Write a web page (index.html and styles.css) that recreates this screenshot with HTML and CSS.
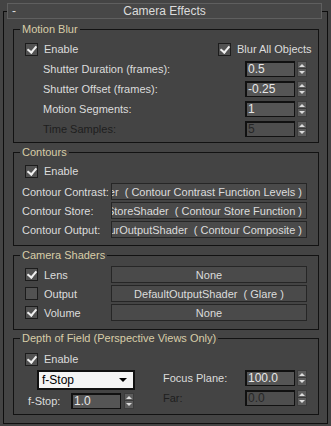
FILE: index.html
```html
<!DOCTYPE html>
<html lang="en">
<head>
  <meta charset="UTF-8">
  <title>Camera Effects</title>
  <link rel="stylesheet" href="styles.css">
</head>
<body>

  <div class="rollout">
    <div class="rollout-head">
      <span class="collapse">-</span>
      <span class="rollout-title">Camera Effects</span>
    </div>

    <fieldset class="group group-blur">
      <legend>Motion Blur</legend>
      <div class="row row-split">
        <label class="check"><span class="box on"></span>Enable</label>
        <label class="check"><span class="box on"></span>Blur All Objects</label>
      </div>
      <div class="row spin-row">
        <span class="lbl">Shutter Duration (frames):</span>
        <span class="field">0.5</span><span class="arrows"></span>
      </div>
      <div class="row spin-row">
        <span class="lbl">Shutter Offset (frames):</span>
        <span class="field">-0.25</span><span class="arrows"></span>
      </div>
      <div class="row spin-row">
        <span class="lbl">Motion Segments:</span>
        <span class="field">1</span><span class="arrows"></span>
      </div>
      <div class="row spin-row disabled">
        <span class="lbl">Time Samples:</span>
        <span class="field">5</span><span class="arrows"></span>
      </div>
    </fieldset>

    <fieldset class="group group-contours">
      <legend>Contours</legend>
      <div class="row row-check">
        <label class="check"><span class="box on"></span>Enable</label>
      </div>
      <div class="slot-row">
        <span class="slot-label">Contour Contrast:</span>
        <span class="slot slot-right"><span class="slot-text">DefaultContourContrastShader&nbsp; ( Contour Contrast Function Levels )</span></span>
      </div>
      <div class="slot-row">
        <span class="slot-label">Contour Store:</span>
        <span class="slot slot-right"><span class="slot-text">DefaultContourStoreShader&nbsp; ( Contour Store Function )</span></span>
      </div>
      <div class="slot-row">
        <span class="slot-label">Contour Output:</span>
        <span class="slot slot-right"><span class="slot-text">DefaultContourOutputShader&nbsp; ( Contour Composite )</span></span>
      </div>
    </fieldset>

    <fieldset class="group group-shaders">
      <legend>Camera Shaders</legend>
      <div class="slot-row">
        <label class="check slot-check"><span class="box on"></span>Lens</label>
        <span class="slot">None</span>
      </div>
      <div class="slot-row">
        <label class="check slot-check"><span class="box"></span>Output</label>
        <span class="slot">DefaultOutputShader&nbsp; ( Glare )</span>
      </div>
      <div class="slot-row">
        <label class="check slot-check"><span class="box on"></span>Volume</label>
        <span class="slot">None</span>
      </div>
    </fieldset>

    <fieldset class="group group-dof">
      <legend>Depth of Field (Perspective Views Only)</legend>
      <div class="row row-check">
        <label class="check"><span class="box on"></span>Enable</label>
      </div>
      <div class="dof-cols">
        <div class="dof-left">
          <div class="dropdown">f-Stop<span class="caret"></span></div>
          <div class="row fstop-row">
            <span class="lbl">f-Stop:</span>
            <span class="field">1.0</span><span class="arrows"></span>
          </div>
        </div>
        <div class="dof-right">
          <div class="row">
            <span class="lbl">Focus Plane:</span>
            <span class="field">100.0</span><span class="arrows"></span>
          </div>
          <div class="row disabled">
            <span class="lbl">Far:</span>
            <span class="field">0.0</span><span class="arrows"></span>
          </div>
        </div>
      </div>
    </fieldset>
  </div>

</body>
</html>
```

FILE: styles.css
```css
* {
  box-sizing: border-box;
}

body {
  margin: 0;
  padding-top: 11px;
  width: 331px;
  height: 426px;
  overflow: hidden;
  background-color: #444444;
  color: #dcdcdc;
  font-family: 'Liberation Sans', Arial, sans-serif;
  font-size: 11px;
  line-height: 14px;
}

/* rollout frame + title bar */
.rollout {
  margin: 0 3px;
  height: 413px;
  border: 1px solid #0e0e0e;
}

.rollout-head {
  position: relative;
  display: flex;
  align-items: center;
  height: 16px;
  margin: -9px 5px 0 3px;
  border: 1px solid #5f5f5f;
  background-color: #474747;
  font-size: 12px;
}

.collapse {
  width: 20px;
  padding-left: 4px;
}

.rollout-title {
  flex: 1;
  text-align: center;
}

.rollout-head::after {
  content: "";
  width: 20px;
}

/* group boxes */
.group {
  min-width: 0;
  margin: 3px 8px 0 9px;
  padding: 0;
  border: 1px solid #121212;
}

.group legend {
  margin-left: 6px;
  padding: 0 2px;
  color: #d8cda8;
}

.group-blur {
  padding: 3px 0 3px;
}

.group-contours {
  margin-top: 2px;
  padding: 2px 0 7px;
}

.group-shaders {
  margin-top: 2px;
  padding: 4px 0 8px;
}

.group-dof {
  margin-top: 1px;
  padding: 4px 0 3px;
}

.row {
  display: flex;
  align-items: center;
  height: 20px;
}

.row-split {
  display: grid;
  grid-template-columns: 193px auto;
  padding-left: 11px;
}

.row-check {
  padding-left: 11px;
}

.spin-row {
  padding: 0 11px 0 29px;
}

.lbl {
  flex: 1;
  white-space: nowrap;
}

/* checkbox */
.check {
  display: flex;
  align-items: center;
  gap: 6px;
}

.box {
  position: relative;
  width: 13px;
  height: 13px;
  border: 1px solid #1c1c1c;
  background-color: #525252;
}

.box.on::after {
  content: "";
  position: absolute;
  left: 3px;
  top: 0;
  width: 4px;
  height: 7px;
  border: solid #f0f0f0;
  border-width: 0 2px 2px 0;
  transform: rotate(40deg);
}

/* spinner field */
.field {
  width: 50px;
  height: 16px;
  padding-left: 1px;
  border: 1px solid #111;
  border-width: 2px 1px 1px 2px;
  background-color: #555555;
  color: #e8e8e8;
  font-size: 12px;
  line-height: 13px;
}

.arrows {
  display: flex;
  flex-direction: column;
  justify-content: space-around;
  align-items: center;
  width: 10px;
  height: 16px;
  margin-left: 2px;
  border: 1px solid #3c3c3c;
  background: linear-gradient(#5c5c5c 0 6px, #3a3a3a 6px 7px, #5c5c5c 7px);
}

.arrows::before,
.arrows::after {
  content: "";
  border-left: 3px solid transparent;
  border-right: 3px solid transparent;
}

.arrows::before {
  border-bottom: 3px solid #dcdcdc;
}

.arrows::after {
  border-top: 3px solid #dcdcdc;
}

.disabled .lbl {
  color: #1e1e1e;
}

.disabled .field {
  color: #262626;
  background-color: #4e4e4e;
}

/* shader slots */
.slot-row {
  display: flex;
  align-items: center;
  height: 17px;
  margin-top: 2px;
  padding: 0 11px 0 8px;
}

.slot-row:first-of-type {
  margin-top: 0;
}

.group-shaders .slot-row {
  padding-left: 11px;
}

.slot-label {
  width: 89px;
  overflow: hidden;
  white-space: nowrap;
}

.slot-check {
  width: 86px;
}

.slot {
  position: relative;
  flex: 1;
  display: flex;
  align-items: center;
  justify-content: center;
  height: 17px;
  overflow: hidden;
  white-space: nowrap;
  border: 1px solid #262626;
  background-color: #4a4a4a;
}

.slot-right {
  justify-content: flex-end;
  padding-right: 4px;
}

/* depth of field */
.dof-cols {
  display: flex;
}

.dof-left {
  width: 121px;
  padding-left: 14px;
}

.dropdown {
  position: relative;
  display: flex;
  align-items: center;
  width: 98px;
  height: 20px;
  margin: 1px 0 0 9px;
  padding-left: 3px;
  border: 2px solid #111;
  background-color: #f4f4f4;
  color: #000;
  font-size: 12px;
}

.caret {
  margin-left: auto;
  margin-right: 6px;
  border-left: 4px solid transparent;
  border-right: 4px solid transparent;
  border-top: 4px solid #000;
}

.fstop-row {
  margin-top: 1px;
}

.fstop-row .lbl {
  flex: none;
  width: 43px;
}

.fstop-row .arrows {
  margin-left: 3px;
}

.dof-right {
  flex: 1;
  margin: -1px 0 0 28px;
  padding-right: 11px;
}
```
